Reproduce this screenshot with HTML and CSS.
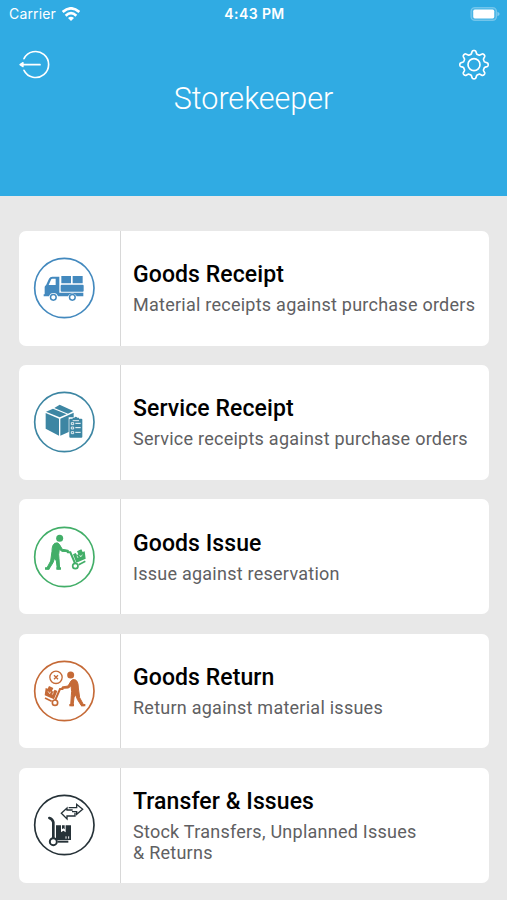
FILE: index.html
```html
<!DOCTYPE html>
<html lang="en">
<head>
    <meta charset="UTF-8">
    <meta name="viewport" content="width=device-width, initial-scale=1.0">
    <title>Storekeeper</title>
    <link rel="stylesheet" href="styles.css">
</head>
<body>
    <header class="header">
        <div class="status-bar">
            <div class="carrier">
                <span>Carrier</span>
                <svg class="wifi" viewBox="0 0 54 42">
                    <g fill="none" stroke="#fff" stroke-width="8">
                        <path d="M2 15 Q27 -7 52 15"/>
                        <path d="M11 26 Q27 11 43 26"/>
                    </g>
                    <path d="M18 33 Q27 25 36 33 L27 42 Z" fill="#fff"/>
                </svg>
            </div>
            <div class="time">4:43 PM</div>
            <div class="battery-wrap">
                <svg class="battery" viewBox="0 0 92 44">
                    <rect x="2" y="2" width="80" height="40" rx="12" fill="#fff" fill-opacity=".12" stroke="#fff" stroke-opacity=".3" stroke-width="4"/>
                    <rect x="9" y="8" width="66" height="28" rx="5" fill="#fff"/>
                    <path d="M85 15 Q92 18 92 22 Q92 26 85 29 Z" fill="#fff" fill-opacity=".4"/>
                </svg>
            </div>
        </div>
        <div class="toolbar">
            <button class="icon-btn" aria-label="Log out">
                <svg viewBox="0 0 96 96" fill="none" stroke="#fff" stroke-width="5" stroke-linecap="round">
                    <path d="M18 29 A39 39 0 1 1 18 64"/>
                    <path d="M12 47 H66"/>
                    <path d="M6 47 L15 41 V53 Z" fill="#fff" stroke-width="4" stroke-linejoin="round"/>
                </svg>
            </button>
            <button class="icon-btn" aria-label="Settings">
                <svg viewBox="0 0 96 96" fill="none" stroke="#fff" stroke-width="5" stroke-linejoin="round">
                    <circle cx="48" cy="47" r="18"/>
                    <path id="gear" d=""/>
                </svg>
            </button>
        </div>
        <h1>Storekeeper</h1>
    </header>

    <main class="menu">
        <a class="card">
            <div class="card-icon blue">
                <svg viewBox="0 0 210 210">
                    <circle class="ring" cx="106" cy="105" r="89"/>
                    <path fill="currentColor" d="M97 69 H126 V91 H97 Z M131 69 H161 V91 H131 Z M98 95 H161 Q164 95 164 98 V113 Q164 116 161 116 H98 Q95 116 95 113 V98 Q95 95 98 95 Z"/>
                    <path fill="currentColor" fill-rule="evenodd" d="M70 71 H91 V119 H163 V130 H143 A14 14 0 0 0 117 130 H87 A14 14 0 0 0 60 130 H44 V124 H47 V103 Q47 99 51 97 L60 77 Q63 71 70 71 Z M70 77 Q67 77 66 80 L59 96 H80 V77 Z"/>
                    <g fill="none" stroke="currentColor" stroke-width="4.5">
                        <circle cx="73" cy="133" r="8.5"/>
                        <circle cx="130" cy="133" r="8.5"/>
                    </g>
                </svg>
            </div>
            <div class="card-text">
                <h2>Goods Receipt</h2>
                <p>Material receipts against purchase orders</p>
            </div>
        </a>

        <a class="card">
            <div class="card-icon teal">
                <svg viewBox="0 0 210 210">
                    <circle class="ring" cx="106" cy="105" r="89"/>
                    <path fill="currentColor" d="M51 74 L72 65 L113 82 L92 91 Z M76 63 L92 53 L133 72 L117 80 Z M50 78 L90 95 V146 L50 125 Z M94 95 L134 77 V91 H119 V135 L94 146 Z"/>
                    <rect x="121" y="95" width="39" height="57" rx="3" fill="currentColor"/>
                    <path fill="currentColor" d="M131 92 H136 Q140 86 145 92 H150 V98 H131 Z"/>
                    <g fill="none" stroke="#fff">
                        <path d="M131 101 H150" stroke-width="2.5"/>
                        <path d="M127 107 H134 V113 H127 Z M127 120 H134 V126 H127 Z M127 134 H134 V140 H127 Z" stroke-width="2.5"/>
                        <path d="M139 109 H155 M139 122 H155 M139 136 H155" stroke-width="3"/>
                    </g>
                </svg>
            </div>
            <div class="card-text">
                <h2>Service Receipt</h2>
                <p>Service receipts against purchase orders</p>
            </div>
        </a>

        <a class="card">
            <div class="card-icon green">
                <svg viewBox="0 0 210 210">
                    <circle class="ring" cx="106" cy="105" r="89"/>
                    <g id="porter">
                        <circle cx="92" cy="49" r="10.5" fill="currentColor"/>
                        <path fill="currentColor" stroke="currentColor" stroke-width="3" stroke-linejoin="round" d="M77 64 Q86 60 91 67 L100 82 L118 85 V89 L98 88 L91 81 L89 98 L90 110 L92 141 H85 L82 117 L77 108 L72 122 L60 141 H52 L65 117 L69 88 Q69 69 77 64 Z"/>
                        <path fill="currentColor" d="M48 136 H61 V143 H48 Z M82 136 H96 V143 H82 Z"/>
                        <path d="M116 91 H124 L139 126" fill="none" stroke="currentColor" stroke-width="6" stroke-linecap="round"/>
                        <circle cx="139" cy="132" r="8" fill="#fff" stroke="currentColor" stroke-width="5"/>
                        <path d="M149 128 L169 118" stroke="currentColor" stroke-width="5"/>
                        <path fill="currentColor" d="M132 97 L140 93 L144 99 L148 97 L144 88 L157 82 L161 90 L167 88 L170 110 L142 122 Z"/>
                        <path d="M144 101 L147 108 M152 99 L155 105 L160 98" fill="none" stroke="#fff" stroke-width="2"/>
                    </g>
                </svg>
            </div>
            <div class="card-text">
                <h2>Goods Issue</h2>
                <p>Issue against reservation</p>
            </div>
        </a>

        <a class="card">
            <div class="card-icon orange">
                <svg viewBox="0 0 210 210">
                    <circle class="ring" cx="106" cy="105" r="89"/>
                    <use href="#porter" transform="matrix(-1 0 0 1 217 8)"/>
                    <g fill="none" stroke="currentColor" stroke-width="4">
                        <circle cx="81" cy="64" r="18.5"/>
                        <path d="M75 58 L87 70 M87 58 L75 70"/>
                    </g>
                </svg>
            </div>
            <div class="card-text">
                <h2>Goods Return</h2>
                <p>Return against material issues</p>
            </div>
        </a>

        <a class="card">
            <div class="card-icon dark">
                <svg viewBox="0 0 210 210">
                    <circle class="ring" cx="106" cy="105" r="89"/>
                    <g fill="none" stroke="currentColor" stroke-width="4">
                        <path d="M119 53 H143 V43 L161 58 L143 73 V65 H129"/>
                        <path d="M131 60 H114 V54 L97 70 L114 87 V78 H138 V68"/>
                        <path d="M61 84 Q71 87 73 97 V145" stroke-width="8" stroke-linecap="round"/>
                        <path d="M86 155 H118" stroke-width="6"/>
                        <circle cx="73" cy="155" r="10.5" fill="#fff" stroke-width="6"/>
                    </g>
                    <path fill="currentColor" d="M81 106 H96 V127 L103 122 L110 127 V106 H126 V150 H81 Z"/>
                    <path fill="currentColor" d="M99 106 H107 V118 L103 115 L99 118 Z"/>
                    <path d="M111 146 V139 M119 146 V139" stroke="#fff" stroke-width="3"/>
                </svg>
            </div>
            <div class="card-text">
                <h2>Transfer &amp; Issues</h2>
                <p>Stock Transfers, Unplanned Issues<br>&amp; Returns</p>
            </div>
        </a>
    </main>

    <script>
        // Build the outline of the settings gear (8 rounded teeth)
        const points = [];
        for (let i = 0; i <= 240; i++) {
            const a = i / 240 * Math.PI * 2;
            const r = 37.5 + 5.5 * Math.tanh(1.8 * Math.cos(8 * a) - 0.3);
            points.push((48 + r * Math.sin(a)).toFixed(1) + ' ' + (47 - r * Math.cos(a)).toFixed(1));
        }
        document.getElementById('gear').setAttribute('d', 'M' + points.join(' L') + ' Z');
    </script>
</body>
</html>
```

FILE: styles.css
```css
* {
    box-sizing: border-box;
}
body {
    margin: 0;
    height: 900px;
    overflow: hidden;
    background-color: #e8e8e8;
    font-family: Roboto, sans-serif;
}
h1, h2, p {
    margin: 0;
}
.header {
    height: 196px;
    background-color: #30abe3;
    color: #fff;
}
.status-bar {
    display: grid;
    grid-template-columns: 1fr auto 1fr;
    align-items: center;
    height: 27px;
    padding: 0 7px 0 9px;
    font-family: Inter, sans-serif;
    font-size: 14px;
}
.carrier {
    display: flex;
    align-items: center;
    gap: 6px;
    letter-spacing: 0.15px;
}
.wifi {
    width: 18px;
    height: 14px;
}
.time {
    font-size: 14px;
    font-weight: 600;
    letter-spacing: 0.4px;
}
.battery-wrap {
    display: flex;
    justify-content: flex-end;
}
.battery {
    width: 30px;
    height: 14px;
}
.toolbar {
    display: flex;
    justify-content: space-between;
    height: 53px;
    padding: 22px 17px 0 18px;
}
.icon-btn {
    width: 32px;
    height: 32px;
    padding: 0;
    border: none;
    background: none;
}
.icon-btn svg {
    display: block;
    width: 32px;
    height: 32px;
}
h1 {
    font-size: 30.5px;
    font-weight: 300;
    line-height: 38px;
    text-align: center;
}
.menu {
    display: flex;
    flex-direction: column;
    gap: 19.5px;
    padding: 34.8px 18px 0 19px;
}
.card {
    display: flex;
    height: 114.8px;
    background-color: #fff;
    border-radius: 7px;
}
.card-icon {
    display: flex;
    align-items: center;
    width: 102px;
    padding-left: 10px;
    border-right: 1.5px solid #d8d8d8;
}
.card-icon svg {
    width: 70px;
    height: 70px;
}
.ring {
    fill: none;
    stroke: currentColor;
    stroke-width: 5;
}
.blue {
    color: #4389be;
}
.teal {
    color: #3d86a3;
}
.green {
    color: #42ae68;
}
.orange {
    color: #c56a37;
}
.dark {
    color: #263238;
}
.card-text {
    display: flex;
    flex-direction: column;
    justify-content: center;
    gap: 5px;
    padding-left: 12px;
}
h2 {
    color: #000;
    font-size: 23px;
    font-weight: 500;
    line-height: 28px;
    letter-spacing: 0.08px;
}
p {
    color: #606062;
    font-size: 18px;
    line-height: 21px;
    letter-spacing: 0.25px;
    white-space: nowrap;
}
```
